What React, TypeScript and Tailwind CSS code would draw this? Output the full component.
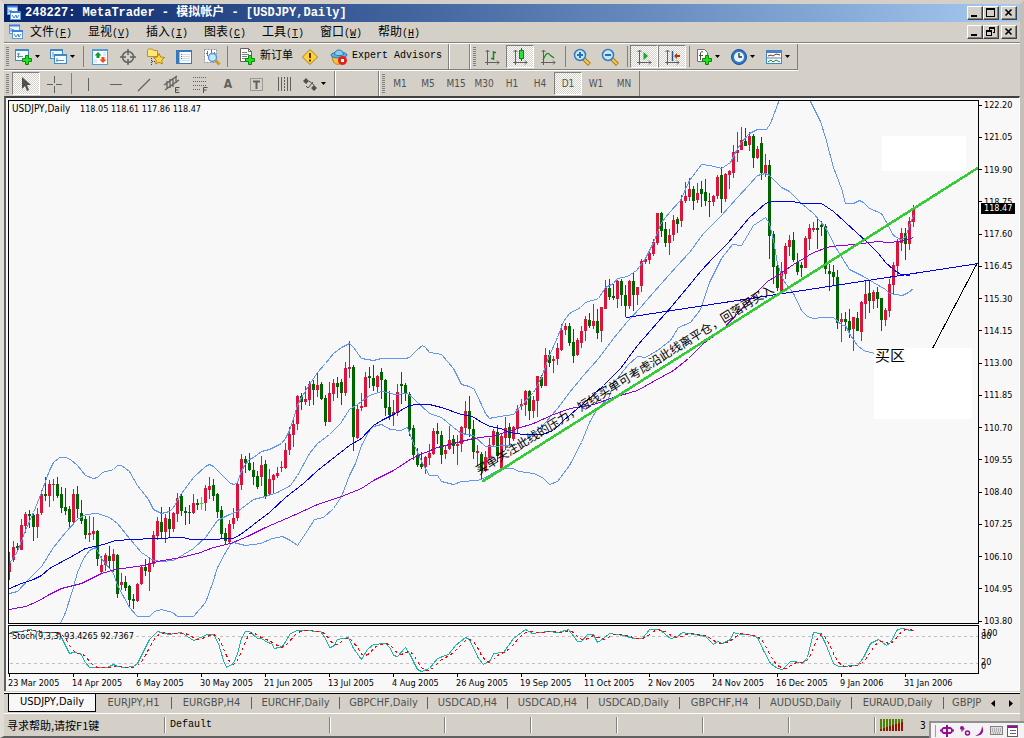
import type { ReactNode } from "react";

const LATIN = "font-['DejaVu_Sans_Condensed','DejaVu_Sans',sans-serif]";
const MONO = "font-['Liberation_Mono','Noto_Sans_CJK_SC',monospace]";

// high, body top, body bottom, low, kind (0 = down, 1 = up, 2 = doji)
const candles = [
  [552, 562, 572, 580, 1], [541, 547, 560, 562, 1], [543, 546, 548, 552, 0], [519, 525, 550, 550, 1],
  [512, 514, 526, 533, 1], [510, 514, 516, 528, 0], [513, 515, 527, 541, 0], [508, 514, 527, 538, 1],
  [490, 494, 513, 515, 1], [477, 494, 496, 501, 0], [480, 484, 496, 507, 1], [479, 484, 485, 501, 1],
  [477, 484, 496, 498, 0], [487, 494, 508, 513, 0], [488, 507, 511, 515, 0], [506, 509, 522, 527, 0],
  [489, 494, 522, 524, 1], [486, 494, 509, 518, 0], [500, 513, 521, 524, 0], [516, 519, 535, 539, 0],
  [516, 533, 535, 542, 1], [517, 531, 534, 540, 1], [530, 531, 559, 566, 0], [556, 565, 572, 574, 1],
  [553, 555, 565, 571, 1], [546, 556, 561, 568, 0], [549, 554, 561, 572, 1], [554, 555, 594, 598, 0],
  [573, 582, 585, 590, 1], [576, 582, 588, 591, 0], [585, 586, 600, 608, 0], [594, 599, 601, 609, 0],
  [583, 584, 601, 602, 1], [566, 567, 584, 585, 1], [559, 567, 571, 576, 0], [558, 563, 572, 591, 1],
  [531, 535, 564, 567, 1], [517, 521, 536, 540, 1], [507, 522, 532, 539, 0], [514, 518, 532, 543, 1],
  [507, 519, 529, 538, 0], [512, 513, 529, 532, 1], [493, 498, 514, 522, 1], [493, 496, 511, 516, 0],
  [507, 511, 513, 525, 0], [505, 512, 513, 524, 0], [494, 503, 513, 514, 1], [499, 503, 505, 510, 0],
  [497, 503, 504, 510, 2], [485, 488, 503, 511, 1], [477, 486, 490, 499, 1], [479, 485, 496, 501, 0],
  [493, 494, 512, 518, 0], [506, 510, 534, 538, 0], [528, 533, 541, 544, 0], [520, 524, 542, 544, 1],
  [508, 518, 524, 529, 1], [482, 484, 518, 521, 1], [454, 459, 485, 490, 1], [456, 459, 463, 473, 0],
  [453, 463, 470, 471, 0], [462, 470, 477, 485, 0], [471, 476, 487, 489, 0], [456, 465, 477, 486, 1],
  [460, 464, 496, 499, 0], [469, 479, 494, 495, 1], [474, 475, 480, 493, 1], [467, 473, 476, 478, 1],
  [461, 467, 468, 472, 1], [443, 450, 468, 469, 1], [427, 434, 450, 455, 1], [418, 424, 435, 447, 1],
  [395, 396, 424, 430, 1], [393, 396, 402, 410, 0], [386, 399, 402, 405, 1], [381, 384, 400, 406, 1],
  [380, 384, 390, 405, 0], [373, 385, 390, 397, 1], [382, 384, 399, 400, 0], [395, 398, 422, 426, 0],
  [382, 393, 422, 422, 1], [379, 383, 394, 401, 1], [377, 383, 387, 398, 0], [379, 382, 393, 405, 0],
  [362, 368, 393, 396, 1], [341, 367, 369, 378, 1], [365, 367, 437, 451, 0], [404, 409, 438, 439, 1],
  [393, 406, 408, 411, 1], [372, 377, 407, 407, 1], [367, 376, 378, 388, 0], [365, 378, 386, 391, 0],
  [375, 376, 387, 392, 1], [368, 372, 380, 399, 0], [379, 380, 408, 416, 0], [391, 407, 415, 420, 0],
  [400, 412, 415, 426, 1], [384, 392, 413, 416, 1], [372, 384, 386, 404, 0], [383, 385, 394, 401, 0],
  [392, 394, 430, 436, 0], [425, 428, 455, 460, 0], [448, 455, 465, 467, 0], [452, 464, 467, 469, 0],
  [456, 457, 467, 474, 1], [444, 453, 458, 465, 1], [428, 431, 454, 455, 1], [423, 431, 434, 444, 0],
  [431, 435, 455, 464, 0], [446, 450, 454, 459, 1], [426, 440, 449, 450, 1], [435, 439, 446, 454, 0],
  [435, 444, 446, 465, 1], [426, 427, 444, 452, 1], [401, 411, 428, 434, 1], [396, 411, 429, 437, 0],
  [420, 429, 452, 459, 0], [445, 451, 453, 466, 1], [452, 454, 471, 480, 0], [451, 457, 471, 472, 1],
  [438, 445, 458, 460, 1], [429, 431, 445, 447, 1], [425, 432, 456, 462, 0], [434, 436, 468, 470, 1],
  [417, 428, 438, 450, 1], [423, 427, 438, 446, 0], [426, 427, 439, 441, 1], [405, 409, 428, 433, 1],
  [399, 404, 406, 410, 1], [390, 391, 405, 416, 1], [390, 391, 411, 420, 0], [396, 400, 411, 418, 1],
  [376, 376, 401, 417, 1], [375, 377, 386, 388, 0], [348, 355, 386, 386, 1], [350, 355, 363, 367, 0],
  [356, 359, 361, 373, 1], [343, 348, 359, 365, 1], [324, 330, 350, 351, 1], [323, 326, 330, 335, 1],
  [323, 326, 343, 346, 0], [329, 342, 356, 363, 0], [338, 340, 355, 356, 1], [326, 331, 343, 348, 1],
  [316, 319, 331, 341, 1], [313, 320, 326, 328, 0], [304, 321, 326, 329, 1], [309, 321, 333, 339, 0],
  [307, 307, 331, 342, 1], [280, 288, 309, 309, 1], [279, 288, 297, 300, 0], [284, 296, 298, 300, 0],
  [280, 281, 299, 308, 1], [279, 281, 295, 306, 0], [285, 295, 306, 317, 0], [280, 281, 306, 309, 1],
  [272, 281, 295, 311, 0], [287, 287, 295, 305, 1], [259, 261, 286, 292, 1], [257, 259, 262, 264, 1],
  [251, 253, 260, 264, 1], [239, 242, 254, 256, 1], [213, 213, 243, 245, 1], [212, 213, 231, 237, 0],
  [222, 229, 243, 247, 0], [229, 235, 243, 255, 1], [215, 220, 235, 241, 1], [217, 219, 224, 233, 0],
  [195, 201, 221, 227, 1], [182, 196, 201, 203, 1], [178, 189, 197, 201, 1], [186, 189, 201, 210, 0],
  [183, 193, 200, 203, 1], [181, 189, 194, 207, 0], [179, 192, 201, 206, 0], [193, 201, 202, 217, 0],
  [195, 196, 202, 206, 1], [175, 177, 196, 199, 1], [167, 175, 199, 213, 0], [173, 174, 199, 202, 1],
  [170, 171, 175, 189, 1], [145, 152, 173, 178, 1], [132, 150, 153, 162, 1], [127, 140, 150, 150, 1],
  [128, 141, 146, 146, 0], [132, 136, 145, 151, 1], [134, 136, 158, 168, 0], [146, 149, 158, 159, 1],
  [137, 143, 173, 180, 0], [154, 165, 174, 177, 1], [160, 165, 236, 259, 0], [231, 234, 267, 284, 0],
  [265, 266, 288, 291, 0], [262, 273, 291, 292, 1], [243, 246, 274, 279, 1], [235, 240, 247, 256, 1],
  [232, 240, 260, 262, 0], [253, 262, 272, 275, 0], [262, 265, 268, 277, 0], [236, 238, 268, 268, 1],
  [224, 228, 239, 250, 1], [222, 228, 230, 232, 1], [218, 228, 230, 249, 0], [221, 225, 227, 236, 0],
  [224, 226, 269, 274, 0], [264, 271, 274, 291, 0], [265, 272, 277, 286, 0], [270, 277, 323, 329, 0],
  [313, 319, 322, 342, 1], [312, 319, 322, 331, 0], [309, 321, 330, 338, 0], [317, 317, 329, 351, 1],
  [312, 318, 331, 331, 0], [301, 302, 332, 341, 1], [280, 294, 304, 319, 1], [280, 293, 301, 313, 0],
  [290, 292, 301, 309, 1], [287, 292, 299, 308, 0], [298, 298, 320, 331, 0], [308, 310, 320, 326, 1],
  [279, 284, 311, 317, 1], [262, 265, 285, 294, 1], [239, 241, 266, 276, 1], [228, 233, 243, 251, 1],
  [228, 233, 244, 260, 0], [217, 221, 244, 250, 1], [205, 209, 222, 227, 1],
];
const candleFill = ["#006400", "#dc143c", "#00ff00"];

const bandUpper =
  "9,563 17,551 25,530 33,512 41,492 49,470 53,462 59,457 65,457 70,459 77,465 85,475 93,478 97,477 102,472 113,469 117,465 121,465 129,471 137,485 148,499 153,509 161,513 169,511 173,507 177,500 181,493 193,477 205,466 209,464 213,466 221,474 230,483 234,484 237,482 240,473 244,465 249,459 253,457 261,451 269,449 281,443 285,438 289,430 293,418 297,405 301,397 309,384 317,372 325,363 333,353 341,347 349,343 353,347 361,358 373,360 381,358 405,358 409,357 417,349 422,345 425,347 429,352 441,354 453,368 461,384 469,386 474,389 480,402 485,413 489,418 493,417 513,414 521,405 533,392 541,377 549,355 557,337 563,321 569,313 580,307 585,302 598,298 605,287 613,283 617,278 627,276 636,270 645,258 653,242 661,222 669,212 680,200 689,180 701,164 710,165 721,168 730,162 735,152 741,142 749,133 757,129 766,129 770,123 779,99 809,99 820,121 825,137 833,167 841,188 845,203 853,203 859,200 863,202 869,208 881,213 885,220 893,235 900,239 905,237 909,225 913,215";
const bandMiddle =
  "9,593 17,591 29,578 41,566 53,547 65,532 77,519 85,514 97,513 109,517 117,523 129,538 141,552 153,560 161,561 173,560 183,554 193,548 205,537 217,520 229,514 237,511 253,499 265,496 277,492 290,485 297,475 309,453 317,443 329,434 340,423 349,409 357,404 369,395 381,391 388,392 394,394 407,393 413,398 429,413 441,417 453,427 461,433 473,435 485,446 513,445 523,441 533,434 545,422 557,408 569,392 583,375 598,358 613,338 627,321 640,307 653,292 677,265 689,252 703,233 721,215 737,197 749,184 757,175 765,173 769,175 781,187 789,191 801,203 813,213 825,227 837,250 849,269 863,276 873,282 885,289 889,293 902,295 908,292 913,288";
const bandLower =
  "60,623 65,612 72,590 77,572 83,558 89,550 95,547 101,558 113,573 117,585 129,607 137,616 149,616 154,611 161,609 172,612 177,616 193,616 205,602 212,583 217,567 225,552 230,544 233,542 245,545 260,543 272,538 282,536 290,540 297,545 307,530 314,519 323,517 333,508 341,496 349,475 355,463 361,445 369,430 373,426 381,424 390,429 400,430 407,427 413,443 422,463 429,475 437,475 441,481 453,484 461,481 477,480 483,478 501,468 512,468 519,471 533,473 542,477 549,484 557,481 569,465 581,442 589,422 597,408 608,398 613,383 627,365 637,356 645,357 657,350 670,340 678,327 690,322 700,309 709,282 721,258 732,244 741,245 753,225 765,217 769,223 773,240 777,263 783,280 793,293 801,310 807,316 813,318 823,317 833,317 842,325 845,325 850,335 857,345 863,350 874,353";
const slowAverage =
  "9,588 21,583 33,579 41,575 49,568 73,555 85,548 103,544 115,540 133,539 153,538 183,537 190,539 207,539 233,538 240,534 269,512 285,497 303,483 317,470 349,445 361,438 373,425 381,420 393,414 409,405 417,404 429,404 441,407 461,414 472,416 483,423 490,426 500,428 509,432 523,434 542,434 553,430 563,420 583,403 603,385 620,368 637,345 657,322 672,305 687,287 700,271 713,257 727,243 749,217 765,203 772,201 792,201 802,203 821,203 833,211 867,242 878,253 885,262 893,269 900,274 910,275";
const longAverage =
  "9,609 25,606 37,601 49,594 61,588 81,583 101,573 115,569 143,565 157,561 181,557 200,552 213,547 230,543 247,536 265,527 293,515 317,504 341,496 361,488 373,480 393,470 413,457 437,447 461,441 473,438 495,435 517,428 533,423 553,414 570,408 593,404 613,397 637,390 653,381 673,370 688,358 703,343 721,330 740,310 753,295 767,281 780,273 793,264 813,252 830,246 853,244 878,241 887,242 900,241 907,239 913,237";
const stochMain =
  "9,633 13,631 20,631 29,629 37,631 45,632 55,632 60,635 65,645 69,653 73,652 80,653 85,662 89,667 107,667 113,664 117,666 125,667 133,666 137,663 145,647 149,639 157,631 161,632 169,634 181,632 193,640 207,634 213,634 218,643 223,660 226,667 233,663 237,653 241,638 245,631 249,631 257,638 261,638 267,642 271,643 274,648 282,646 290,633 297,630 303,630 320,631 325,638 329,647 333,646 337,639 348,637 353,648 361,659 367,649 373,644 385,643 390,648 393,655 397,656 405,647 409,653 417,669 421,671 429,668 437,658 448,654 455,645 465,637 469,639 478,658 483,664 490,660 493,653 503,652 513,638 525,629 532,633 547,631 558,632 568,629 577,641 581,641 587,634 593,634 597,642 603,638 609,633 623,635 633,638 642,638 649,629 659,629 670,638 676,637 682,632 705,636 713,644 717,641 722,643 730,639 733,632 740,634 748,634 757,637 763,650 770,663 777,668 782,669 790,661 795,661 802,663 807,657 813,632 820,633 825,643 833,663 838,666 857,665 863,657 870,643 878,639 886,645 890,642 897,629 902,628 910,630 913,630";

function valueAt(points: number[][], x: number) {
  for (let i = 1; i < points.length; i++) {
    const [x0, y0] = points[i - 1];
    const [x1, y1] = points[i];
    if (x <= x1) return y0 + ((y1 - y0) * Math.max(0, x - x0)) / (x1 - x0);
  }
  return points[points.length - 1][1];
}

// signal line: three bar average of the main line
const mainPoints = stochMain.split(" ").map((p) => p.split(",").map(Number));
const stochSignal = candles
  .map((_, i) => {
    const x = 9 + i * 4;
    const sum = valueAt(mainPoints, x) + valueAt(mainPoints, x - 4) + valueAt(mainPoints, x - 8);
    return `${x},${Math.round(sum / 3)}`;
  })
  .join(" ");

const prices = ["122.20", "121.05", "119.90", "118.75", "117.60", "116.45", "115.30", "114.15", "113.00", "111.85", "110.70", "109.55", "108.40", "107.25", "106.10", "104.95", "103.80"];
const dates = ["23 Mar 2005", "14 Apr 2005", "6 May 2005", "30 May 2005", "21 Jun 2005", "13 Jul 2005", "4 Aug 2005", "26 Aug 2005", "19 Sep 2005", "11 Oct 2005", "2 Nov 2005", "24 Nov 2005", "16 Dec 2005", "9 Jan 2006", "31 Jan 2006"];

const menus = [
  ["文件", "F"],
  ["显视", "V"],
  ["插入", "I"],
  ["图表", "C"],
  ["工具", "T"],
  ["窗口", "W"],
  ["帮助", "H"],
];

const tabs = [
  { name: "EURJPY,H1", width: "w-[76px]" },
  { name: "EURGBP,H4", width: "w-20" },
  { name: "EURCHF,Daily", width: "w-[88px]" },
  { name: "GBPCHF,Daily", width: "w-[88px]" },
  { name: "USDCAD,H4", width: "w-20" },
  { name: "USDCAD,H4", width: "w-20" },
  { name: "USDCAD,Daily", width: "w-[92px]" },
  { name: "GBPCHF,H4", width: "w-20" },
  { name: "AUDUSD,Daily", width: "w-[92px]" },
  { name: "EURAUD,Daily", width: "w-[92px]" },
];

function Icon({ children, size = 18 }: { children: ReactNode; size?: number }) {
  return (
    <svg width={size} height={size} viewBox="0 0 18 18" fill="none" className="shrink-0" aria-hidden="true">
      {children}
    </svg>
  );
}

function Plus({ x = 7, y = 7 }: { x?: number; y?: number }) {
  return (
    <path
      d={`M${x + 3.5} ${y + 0.5}h3v3h3v3h-3v3h-3v-3h-3v-3h3z`}
      fill="#22e022"
      stroke="#068a06"
    />
  );
}

function AppIcon() {
  return (
    <svg width="16" height="16" viewBox="0 0 16 16" className="shrink-0" aria-hidden="true">
      <rect x="1.500" y="1.500" width="10" height="8" fill="#e8f4ff" stroke="#5a9be0" />
      <path d="M1 1.500h11" stroke="#3b82d6" strokeWidth="2" />
      <path d="M3 4v4M3 7l2-2 1 2" stroke="#5a9be0" fill="none" />
      <rect x="4.500" y="6.500" width="10" height="8" fill="#fff" stroke="#5a9be0" />
      <path d="M4 7h11" stroke="#3b82d6" strokeWidth="2" />
      <path d="M6 10l2 3 2-3 1 3 2-3" stroke="#3b82d6" fill="none" />
    </svg>
  );
}

function Axes() {
  return <path d="M4.500 2v15M2 14.500h14M2.500 4l2-2 2 2M14 12.500l2 2-2 2" stroke="#606060" />;
}

function Magnifier({ minus = false }: { minus?: boolean }) {
  return (
    <Icon>
      <path d="M11 11l5.500 5.500" stroke="#a87a10" strokeWidth="4" />
      <path d="M11 11l5 5" stroke="#f2cf50" strokeWidth="2" />
      <circle cx="7" cy="7" r="5.500" fill="#c4e8fb" stroke="#3a78b8" strokeWidth="1.500" />
      <path d={minus ? "M4 7h6" : "M4 7h6M7 4v6"} stroke="#2a6fb0" strokeWidth="2" />
    </Icon>
  );
}

function Grip() {
  return (
    <span className="h-5 w-[3px] shrink-0 bg-[repeating-linear-gradient(#808080_0_1px,#d4d0c8_1px_2px)]" />
  );
}

function Separator({ narrow = false }: { narrow?: boolean }) {
  return <span className={`h-[21px] w-px shrink-0 bg-[#808080] ${narrow ? "mr-0.5 ml-px" : "mr-0.5 ml-[3px]"}`} />;
}

type ToolProps = { label: string; children: ReactNode; pressed?: boolean; arrow?: boolean };

function Tool({ label, children, pressed, arrow }: ToolProps) {
  const look = pressed
    ? "border border-t-[#808080] border-l-[#808080] border-r-white border-b-white bg-[repeating-conic-gradient(#ffffff_0_25%,#d4d0c8_0_50%)] bg-[length:2px_2px]"
    : "";
  return (
    <button
      type="button"
      aria-label={label}
      className={`flex h-[23px] shrink-0 items-center ${arrow ? "w-[35px] gap-0.5 pl-[3px]" : "w-7 justify-center"} ${look}`}
    >
      {children}
      {arrow && (
        <svg width="5" height="3" viewBox="0 0 5 3" aria-hidden="true">
          <path d="M0 0h5L2.500 3z" fill="#000" />
        </svg>
      )}
    </button>
  );
}

function WindowButtons({ restore = false }: { restore?: boolean }) {
  const cls =
    "flex h-[14px] w-4 items-center justify-center border border-t-white border-l-white border-r-[#404040] border-b-[#404040] bg-[#d4d0c8] shadow-[inset_-1px_-1px_#808080]";
  return (
    <div className="flex">
      <button type="button" aria-label="Minimize" className={cls}>
        <svg width="10" height="10" viewBox="0 0 10 10"><path d="M1 7h6v2H1z" /></svg>
      </button>
      <button type="button" aria-label={restore ? "Restore" : "Maximize"} className={cls}>
        <svg width="10" height="10" viewBox="0 0 10 10" shapeRendering="crispEdges">
          {restore ? (
            <path d="M3 0h6v6H7V5h1V2H4v1H3zM0 3h6v6H0zM1 5v3h4V5z" fillRule="evenodd" />
          ) : (
            <path d="M0 0h9v9H0zM1 2v6h7V2z" fillRule="evenodd" />
          )}
        </svg>
      </button>
      <button type="button" aria-label="Close" className={`${cls} ml-0.5`}>
        <svg width="10" height="10" viewBox="0 0 10 10"><path d="M1.500 1.500l6 6M7.500 1.500l-6 6" stroke="#000" strokeWidth="1.600" /></svg>
      </button>
    </div>
  );
}

function StandardBar() {
  return (
    <div className="flex h-[25px] items-center">
      <div className="flex h-full w-[445px] items-center border-r border-[#808080] pl-0.5">
        <Grip />
        <span className="w-[3px]" />
        <Tool label="New chart" arrow>
          <Icon>
            <rect x="0.500" y="1.500" width="13" height="11" fill="#f4fbff" stroke="#3f87c8" />
            <path d="M0 2h14" stroke="#3f87c8" strokeWidth="2" />
            <path d="M3.500 5v5M2 8.500h6M2 6h3" stroke="#5c8fb8" />
            <Plus />
          </Icon>
        </Tool>
        <Tool label="Profiles" arrow>
          <Icon>
            <rect x="0.500" y="1.500" width="12" height="9" fill="#f4fbff" stroke="#3f87c8" />
            <path d="M0 2h13" stroke="#3f87c8" strokeWidth="2" />
            <rect x="4.500" y="6.500" width="12" height="9" fill="#f4fbff" stroke="#3f87c8" />
            <path d="M4 7h13" stroke="#3f87c8" strokeWidth="2" />
            <path d="M3 4v5M7 10v4M6 12.500h8" stroke="#5c8fb8" />
          </Icon>
        </Tool>
        <Separator narrow />
        <Tool label="Market watch">
          <Icon>
            <rect x="1.500" y="1.500" width="15" height="15" fill="#fff" stroke="#4f9be0" />
            <path d="M1 2h16" stroke="#4f9be0" strokeWidth="2" />
            <path d="M7 4l3.500 3.500H8.500V10h-3V7.500h-2z" fill="#0d9a2d" />
            <path d="M12 15l-3.500-3.500h2V9h3v2.500h2z" fill="#ee4b20" />
            <path d="M12 5h3M3 12h3M12 7h3M3 14h3" stroke="#b8d4ee" />
          </Icon>
        </Tool>
        <Tool label="Data window">
          <Icon>
            <circle cx="9" cy="9" r="5.500" stroke="#606060" strokeWidth="1.500" />
            <path d="M9 1v6M9 11v6M1 9h6M11 9h6" stroke="#606060" strokeWidth="1.500" />
          </Icon>
        </Tool>
        <Tool label="Navigator">
          <Icon>
            <path d="M0.500 2.500l1-1.500h4l1 1.500h4v6h-10z" fill="#ffe777" stroke="#b8941a" />
            <path d="M4.500 10v7M5 13.500h4" stroke="#404040" strokeDasharray="1 1" />
            <path d="M12 5.500l1.700 3.500 3.800.5-2.800 2.700.7 3.800L12 14.200 8.600 16l.7-3.800L6.500 9.500l3.800-.5z" fill="#ffd83c" stroke="#b8841a" />
          </Icon>
        </Tool>
        <Tool label="Terminal">
          <Icon>
            <rect x="1.500" y="2.500" width="15" height="13" fill="#fff" stroke="#3778b8" />
            <path d="M1 3h16" stroke="#3778b8" strokeWidth="2" />
            <path d="M3 3v12" stroke="#3778b8" strokeWidth="3" />
            <path d="M7 6.500h8M7 8.500h8M7 10.500h8M7 12.500h8" stroke="#c8dcf0" />
            <path d="M6.500 6v1M6.500 8v1M6.500 10v1" stroke="#e04020" />
          </Icon>
        </Tool>
        <Tool label="Strategy tester">
          <Icon>
            <rect x="1.500" y="1.500" width="12" height="13" fill="#fff" stroke="#909090" strokeDasharray="2 1" />
            <path d="M4.500 3v5M8.500 2v5M11.500 4v3M3 5.500h2M10 6h3" stroke="#707070" />
            <path d="M12 12l4.500 4.500" stroke="#d09a1c" strokeWidth="3" />
            <circle cx="9.500" cy="9.500" r="4" fill="#c8e8fa" stroke="#4f9be0" strokeWidth="1.500" />
          </Icon>
        </Tool>
        <Separator narrow />
        <button type="button" className="flex h-[23px] w-[66px] shrink-0 items-center gap-1 pl-2 text-[11px]">
          <Icon>
            <path d="M2.500 0.500h8l3 3v10h-11z" fill="#fff" stroke="#606060" />
            <path d="M10.500 0.500v3h3" stroke="#606060" />
            <path d="M4 4.500h5M4 6.500h7M4 8.500h5M4 10.500h4" stroke="#808080" />
            <Plus />
          </Icon>
          <span className="-mt-1 whitespace-nowrap">新订单</span>
        </button>
        <Tool label="MetaEditor">
          <Icon>
            <path d="M9 1.500l7.500 7.500L9 16.500 1.500 9z" fill="#ffd23a" stroke="#b07c10" strokeLinejoin="round" />
            <path d="M9 5v5M9 11.500v2" stroke="#503800" strokeWidth="2" />
          </Icon>
        </Tool>
        <button type="button" className={`flex h-[23px] items-center gap-1 pl-1.5 text-[10px] ${MONO}`}>
          <Icon>
            <path d="M2 9l1.500 5c2 3 7 3 9 0L15 9z" fill="#f4c23c" stroke="#b8841a" />
            <ellipse cx="9" cy="7" rx="8" ry="3" fill="#62aee0" stroke="#2c78b0" />
            <path d="M4.500 6.500c0-6 9-6 9 0-2 1.600-7 1.600-9 0z" fill="#8ccaf0" stroke="#2c78b0" />
            <circle cx="12.500" cy="12.500" r="4.500" fill="#e0241c" />
            <rect x="11" y="11" width="3" height="3" fill="#fff" />
          </Icon>
          <span className="-mt-0.5 whitespace-nowrap">Expert Advisors</span>
        </button>
      </div>
      <div className="h-full w-[21px] border-r border-l border-l-white border-r-[#808080]" />
      <div className="flex h-full items-center border-r border-l border-l-white border-r-[#808080] pl-0.5">
        <Grip />
        <span className="w-0.5" />
        <Tool label="Bar chart">
          <Icon><Axes /><path d="M10.500 3v9M8 10.500h3M10 4.500h3" stroke="#108a20" strokeWidth="1.500" /></Icon>
        </Tool>
        <Tool label="Candlesticks" pressed>
          <Icon><Axes /><path d="M10.500 0v13" stroke="#0a6a14" /><rect x="8.500" y="2.500" width="4" height="8" fill="#28e040" stroke="#0a8a1c" /></Icon>
        </Tool>
        <Tool label="Line chart">
          <Icon><Axes /><path d="M4 12c3-7 5-8 7-5l4 3" stroke="#108a20" strokeWidth="1.200" /></Icon>
        </Tool>
        <Separator />
        <Tool label="Zoom in"><Magnifier /></Tool>
        <Tool label="Zoom out"><Magnifier minus /></Tool>
        <Separator />
        <Tool label="Auto scroll" pressed>
          <Icon><Axes /><path d="M8.500 4l4.500 4-4.500 4z" fill="#14a82c" /></Icon>
        </Tool>
        <Tool label="Chart shift" pressed>
          <Icon><Axes /><path d="M9.500 3v10" stroke="#1c5a98" strokeWidth="1.500" /><path d="M11 8l3-3v2h3v2h-3v2z" fill="#c02c10" /></Icon>
        </Tool>
        <Separator />
        <Tool label="Indicators" arrow>
          <Icon>
            <path d="M2.500 1.500h7l3 3v9h-10z" fill="#fff" stroke="#707070" />
            <path d="M8 4c-2-1-2.500 0-2.500 2v6M4 7.500h4" stroke="#505050" />
            <Plus />
          </Icon>
        </Tool>
        <Tool label="Periods" arrow>
          <Icon>
            <circle cx="9" cy="9" r="7.500" fill="#2f78cc" stroke="#1c4f94" />
            <circle cx="9" cy="9" r="5" fill="#e8f4fc" />
            <path d="M9 5v4h3" stroke="#303030" strokeWidth="1.300" />
          </Icon>
        </Tool>
        <Tool label="Templates" arrow>
          <Icon>
            <rect x="1.500" y="2.500" width="15" height="13" fill="#fff" stroke="#3f87c8" />
            <path d="M1 3.500h16" stroke="#3f87c8" strokeWidth="3" />
            <path d="M1 10h16" stroke="#3f87c8" />
            <path d="M3 8l3-1 2 1 3-2 4 1" stroke="#a02010" />
            <path d="M3 14l3-2 2 2 3-2 4 2" stroke="#108a20" />
          </Icon>
        </Tool>
      </div>
    </div>
  );
}

function DrawingBar() {
  return (
    <div className="flex h-[25px] items-center">
      <div className="flex h-full w-[331px] items-center border-r border-[#808080] pl-0.5">
        <Grip />
        <span className="w-[3px]" />
        <Tool label="Cursor" pressed>
          <Icon><path d="M5 2v12l3-3 2 5 2-1-2-5h4z" fill="#505050" /></Icon>
        </Tool>
        <Tool label="Crosshair">
          <Icon><path d="M9.500 1v7M9.500 11v7M2 9.500h6M11 9.500h6" stroke="#606060" /></Icon>
        </Tool>
        <Separator />
        <Tool label="Vertical line">
          <Icon><path d="M9.500 3v13" stroke="#606060" /></Icon>
        </Tool>
        <Tool label="Horizontal line">
          <Icon><path d="M3 9.500h12" stroke="#606060" /></Icon>
        </Tool>
        <Tool label="Trendline">
          <Icon><path d="M3 16L15 4" stroke="#606060" strokeWidth="1.300" /></Icon>
        </Tool>
        <Tool label="Equidistant channel">
          <Icon>
            <path d="M1 10L14 1M2 15L16 5M4 6v8M7 4v9M10 3v9M13 1v7" stroke="#606060" strokeWidth="1.300" />
            <path d="M16.500 12.500h-4v5h4M12.500 15h3" stroke="#505050" />
          </Icon>
        </Tool>
        <Tool label="Fibonacci retracement">
          <Icon>
            <path d="M2 2.500h14M2 6.500h14M2 10.500h14M2 14.500h8" stroke="#606060" strokeDasharray="1 1" />
            <path d="M16.500 12.500h-4v5.500M12.500 15h3" stroke="#505050" />
          </Icon>
        </Tool>
        <Tool label="Text">
          <span className={`text-xs font-bold text-[#606060] ${LATIN}`}>A</span>
        </Tool>
        <Tool label="Text label">
          <Icon>
            <rect x="3.500" y="3.500" width="12" height="12" stroke="#606060" strokeDasharray="1 1" />
            <path d="M6 6.500h7M9.500 6v8" stroke="#606060" strokeWidth="2" />
          </Icon>
        </Tool>
        <Tool label="Cycle lines">
          <Icon>
            <path d="M3.500 2v14M6.500 2v14M12.500 2v14M15.500 2v14" stroke="#606060" />
            <path d="M9.500 2v14" stroke="#606060" strokeDasharray="2 1" />
          </Icon>
        </Tool>
        <Tool label="Arrows" arrow>
          <Icon>
            <path d="M5 3l3 3-3 3-3-3zM13 10l3 3-3 3-3-3z" fill="#505050" />
            <path d="M5 11l2 2 5-6M8 6l5 4" stroke="#505050" />
          </Icon>
        </Tool>
      </div>
      <div className="h-full w-11 border-r border-l border-l-white border-r-[#808080]" />
      <div className={`flex h-full items-center border-r border-l border-l-white border-r-[#808080] pr-px pl-0.5 text-[10px] text-[#505050] ${LATIN}`}>
        <Grip />
        <span className="w-px" />
        {["M1", "M5", "M15", "M30", "H1", "H4", "D1", "W1", "MN"].map((p) => (
          <Tool key={p} label={p} pressed={p === "D1"}>
            <span>{p}</span>
          </Tool>
        ))}
      </div>
    </div>
  );
}

function PriceChart() {
  return (
    <div className="h-[524px] border border-black">
      <svg width="100%" height="100%" className="block" fill="none" aria-label="USDJPY daily chart">
        <g transform="translate(-9 -101)" shapeRendering="crispEdges">
          <rect x="882" y="136" width="84" height="35" fill="#fff" />
          <rect x="874" y="348" width="98" height="71" fill="#fff" />
          {candles.map(([high, top, bottom, low, kind], i) => (
            <g key={i} fill={candleFill[kind]}>
              <rect x={9 + i * 4} y={high} width="1" height={low - high} />
              <rect x={8 + i * 4} y={top} width="3" height={Math.max(1, bottom - top)} />
            </g>
          ))}
        </g>
        <g transform="translate(-8.5 -100.5)" shapeRendering="crispEdges">
          <polyline points={bandUpper} stroke="#6495ed" />
          <polyline points={bandMiddle} stroke="#6495ed" />
          <polyline points={bandLower} stroke="#6495ed" />
          <polyline points={longAverage} stroke="#9400d3" />
          <polyline points={slowAverage} stroke="#0000e6" />
          <path d="M626 317L978 263" stroke="#0000e6" />
          <path d="M482 481L978 167" stroke="#32cd32" strokeWidth="2.500" />
          <path d="M976 264L932 348" stroke="#000" />
        </g>
        <g fill="#000" className="font-['Noto_Sans_CJK_SC',sans-serif]">
          <text transform="translate(470 374) rotate(-31.8)" fontSize="12">
            买单关注此线的压力，短线买单可考虑沿此线离平仓，回落再买入
          </text>
          <text x="866" y="260" fontSize="15">买区</text>
        </g>
        <g fill="#000" className={LATIN}>
          <text x="3" y="11" fontSize="10">USDJPY,Daily</text>
          <text x="71" y="11" fontSize="9">118.05 118.61 117.86 118.47</text>
        </g>
      </svg>
    </div>
  );
}

function StochChart() {
  return (
    <div className="mt-px h-[49px] border border-black">
      <svg width="100%" height="100%" className="block" fill="none" aria-label="Stochastic oscillator">
        <g transform="translate(-8.5 -625.5)" shapeRendering="crispEdges">
          <path d="M9 636H4000M9 663H4000" stroke="#c0c0c0" strokeDasharray="3 3" />
          <polyline points={stochMain} stroke="#20b2aa" />
          <polyline points={stochSignal} stroke="#ff0000" strokeDasharray="3 3" />
        </g>
        <text x="3" y="13" fontSize="9" fill="#000" className={LATIN}>Stoch(9,3,3) 93.4265 92.7367</text>
      </svg>
    </div>
  );
}

function ChartWindow() {
  return (
    <main className="flex border-t-2 border-r border-l-2 border-t-[#404040] border-r-white border-l-[#606060] bg-[#f8f8f8] pt-0.5 pl-0.5">
      <div className="min-w-0 flex-1">
        <PriceChart />
        <StochChart />
        <div className={`flex h-[17px] overflow-hidden text-[9px] leading-3 ${LATIN}`}>
          {dates.map((d) => (
            <div key={d} className="w-16 shrink-0 whitespace-nowrap">
              <div className="ml-px h-[3px] w-px bg-black" />
              {d}
            </div>
          ))}
        </div>
      </div>
      <div className={`relative -mt-px w-10 text-[9px] leading-3 ${LATIN}`}>
        <div className="flex h-[528px] flex-col justify-between">
          {prices.map((p) => (
            <div key={p} className="flex items-center gap-0.5">
              <span className="h-px w-[3px] bg-black" />
              {p}
            </div>
          ))}
        </div>
        <span className="absolute top-[104px] left-0.5 h-[11px] w-[34px] bg-black pl-[3px] leading-[11px] text-white">118.47</span>
        <span className="absolute top-[528px] left-[3px]">100</span>
        <span className="absolute top-[531px] left-0.5">80</span>
        <span className="absolute top-[557px] left-0.5">20</span>
        <span className="absolute top-[561px] left-0.5">0</span>
      </div>
    </main>
  );
}

function ChartTabs() {
  return (
    <nav className={`mt-px flex h-[21px] items-start overflow-hidden border-t border-white text-[11px] text-[#505050] ${LATIN}`}>
      <div className="flex h-5 min-w-0 flex-1 items-start overflow-hidden border-t border-black pl-1">
        <button type="button" className="h-[18px] w-[88px] shrink-0 border-r border-b border-l border-black bg-[#f8f8f8] text-black">
          USDJPY,Daily
        </button>
        {tabs.map((t, i) => (
          <button
            key={i}
            type="button"
            className={`flex h-[18px] shrink-0 items-center justify-center ${t.width}`}
          >
            <span className="flex-1 whitespace-nowrap">{t.name}</span>
            <span className="h-3 w-px bg-[#606060]" />
          </button>
        ))}
        <button type="button" className="h-[18px] min-w-0 flex-1 pl-2 text-left">GBPJP</button>
      </div>
      <div className="flex h-5 w-9 shrink-0 items-center justify-around border-t border-black">
        <button type="button" aria-label="Scroll left">
          <svg width="4" height="7" viewBox="0 0 4 7"><path d="M4 0v7L0 3.500z" /></svg>
        </button>
        <button type="button" aria-label="Scroll right">
          <svg width="4" height="7" viewBox="0 0 4 7"><path d="M0 0v7l4-3.500z" /></svg>
        </button>
      </div>
    </nav>
  );
}

const cell = "h-4 shrink-0 border-l border-[#808080] shadow-[inset_1px_0_#fff]";

function StatusBar() {
  return (
    <footer className="relative flex h-[23px] items-center border-t border-white text-[11px]">
      <span className="w-40 shrink-0 pl-[3px]">寻求帮助,请按F1键</span>
      <span className={`${cell} w-[165px] pl-[5px] text-[10px] ${MONO}`}>Default</span>
      <span className={`${cell} w-[115px]`} />
      <span className={`${cell} w-[86px]`} />
      <span className={`${cell} w-[86px]`} />
      <span className={`${cell} w-[86px]`} />
      <span className={`${cell} w-[86px]`} />
      <span className={`${cell} w-[86px]`} />
      <span className={`${cell} flex flex-1 items-center gap-4 pl-[5px]`}>
        <svg width="24" height="12" viewBox="0 0 24 12" shapeRendering="crispEdges" aria-hidden="true">
          {[0, 1, 2, 3, 4, 5, 6, 7].map((i) => (
            <g key={i}>
              <rect x={i * 3} y="0" width="2" height={10 - i} fill="#4f8000" />
              <rect x={i * 3} y={10 - i} width="2" height={2 + i} fill="#981400" />
            </g>
          ))}
        </svg>
        <span className={`text-[10px] ${LATIN}`}>3</span>
      </span>
      <div className="absolute -right-1 -bottom-0.5 flex h-[17px] w-[95px] items-center justify-between border-t-2 border-l-2 border-[#909090] bg-[#f4f2f4] pr-1.5 pl-1">
        <span className="h-3 w-px bg-[#a0a0a0]" />
        <svg width="14" height="12" viewBox="0 0 14 12">
          <path d="M7 0v12" stroke="#901090" strokeWidth="2" />
          <path d="M3.500 3h7c2 1 2 4 0 5h-7c-2-1-2-4 0-5zM0 5.500h2M12 5.500h2" stroke="#901090" strokeWidth="1.800" fill="none" />
        </svg>
        <svg width="12" height="12" viewBox="0 0 12 12">
          <circle cx="3" cy="3" r="2" fill="#901090" />
          <path d="M5 3c0 2-1 3-3 3" stroke="#901090" fill="none" />
          <circle cx="8.500" cy="8" r="2" stroke="#901090" strokeWidth="1.500" fill="none" />
        </svg>
        <svg width="10" height="12" viewBox="0 0 10 12">
          <path d="M7 1c3 6 0 10-7 10 3-1 7-4 7-10z" fill="#901090" />
        </svg>
        <svg width="13" height="10" viewBox="0 0 13 10">
          <rect x="0.500" y="0.500" width="12" height="8" fill="#e0dce0" stroke="#808080" />
          <path d="M2 3h9M2 5h9M3 7h7" stroke="#808080" strokeDasharray="1 1" />
        </svg>
        <svg width="11" height="12" viewBox="0 0 11 12">
          <rect x="0.500" y="0.500" width="10" height="11" fill="#fff" stroke="#606060" />
          <path d="M1 2h9" stroke="#901090" strokeWidth="2" />
          <path d="M3 5.500h6M3 8.500h6" stroke="#606060" />
        </svg>
      </div>
    </footer>
  );
}

export default function App() {
  return (
    <div className="border-t-4 border-r-4 border-b-2 border-l-4 border-t-[#d4d0c8] border-r-[#c4c0b8] border-b-[#606060] border-l-[#e0ddd6] bg-[#d4d0c8] font-['Noto_Sans_CJK_SC',sans-serif] text-black">
      <header className="flex h-[18px] items-center gap-[3px] bg-linear-to-r from-[#0a246a] to-[#a6caf0] pr-[3px] pl-0.5">
        <AppIcon />
        <h1 className={`flex-1 text-xs leading-4 font-bold whitespace-pre text-white ${MONO}`}>
          248227: MetaTrader - 模拟帐户 - [USDJPY,Daily]
        </h1>
        <WindowButtons />
      </header>
      <div className="flex h-5 items-center pr-[3px] pl-1">
        <AppIcon />
        <nav className="flex flex-1 pl-0.5 text-xs leading-4">
          {menus.map(([name, key]) => (
            <button key={key} type="button" className="flex w-[58px] items-baseline pl-1 whitespace-nowrap">
              {name}
              <span className={`text-[10px] ${MONO}`}>
                (<u>{key}</u>)
              </span>
            </button>
          ))}
        </nav>
        <WindowButtons restore />
      </div>
      <div className="h-0.5 border-t border-b border-t-[#808080] border-b-white" />
      <StandardBar />
      <div className="h-0.5 w-[794px] border-t border-b border-t-[#808080] border-b-white" />
      <DrawingBar />
      <ChartWindow />
      <ChartTabs />
      <StatusBar />
    </div>
  );
}
